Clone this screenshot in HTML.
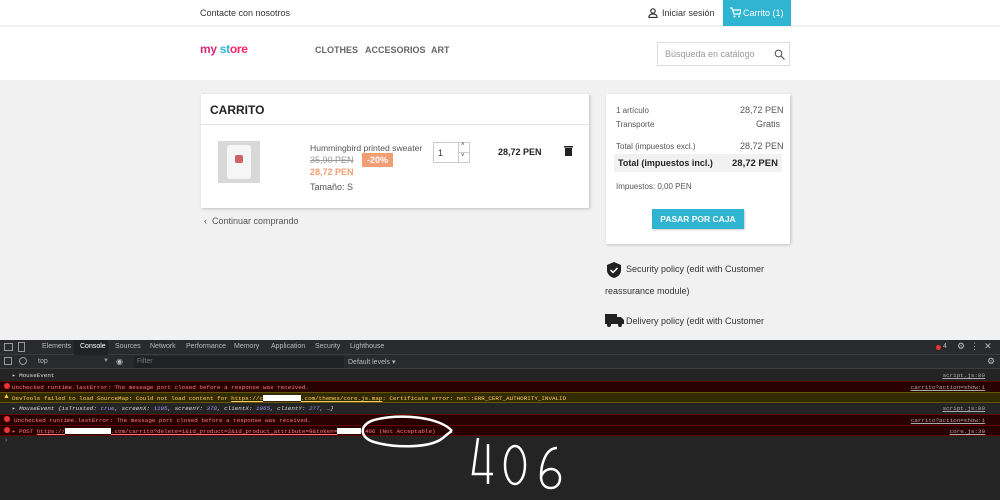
<!DOCTYPE html><html><head><meta charset="utf-8"><style>
*{box-sizing:border-box;margin:0;padding:0}
body{width:1000px;height:500px;overflow:hidden;font-family:"Liberation Sans",sans-serif;background:#f1f1f1;position:relative;font-size:9px;color:#333}
.a{position:absolute;white-space:nowrap}
.mono{font-family:"Liberation Mono",monospace;font-size:5.9px}
.red{display:inline-block;background:#fff;height:6px;vertical-align:middle}
.lk{position:absolute;right:15px;color:#aaa;text-decoration:underline}
</style></head><body>
<div class="a" style="left:0;top:0;width:1000px;height:26px;background:#fff;border-bottom:1px solid #eee"></div>
<div class="a" style="left:200px;top:8px;font-size:9px;color:#333">Contacte con nosotros</div>
<svg class="a" style="left:648px;top:8px" width="10" height="10" viewBox="0 0 10 10"><circle cx="5" cy="3" r="2.2" fill="none" stroke="#333" stroke-width="1.2"/><path d="M1 9.5v-1c0-1.5 2-2.5 4-2.5s4 1 4 2.5v1z" fill="none" stroke="#333" stroke-width="1.2"/></svg>
<div class="a" style="left:662px;top:8px;font-size:9px">Iniciar sesión</div>
<div class="a" style="left:723px;top:0;width:68px;height:26px;background:#2fb5d2"></div>
<svg class="a" style="left:730px;top:7px" width="11" height="11" viewBox="0 0 11 11"><path d="M0 1h2l2 6h6l1-4H3" fill="none" stroke="#fff" stroke-width="1.3"/><circle cx="4.5" cy="9.5" r="1" fill="#fff"/><circle cx="9" cy="9.5" r="1" fill="#fff"/></svg>
<div class="a" style="left:743px;top:8px;font-size:9px;color:#fff">Carrito (1)</div>
<div class="a" style="left:0;top:27px;width:1000px;height:53px;background:#fff"></div>
<div class="a" style="left:200px;top:42px;font-size:12px;font-weight:bold;letter-spacing:-0.3px"><span style="color:#d22a7c">my</span> <span style="color:#2fb5d2">st</span><span style="color:#f26">ore</span></div>
<div class="a" style="left:315px;top:45px;font-size:9px;color:#666;font-weight:bold">CLOTHES</div>
<div class="a" style="left:365px;top:45px;font-size:9px;color:#666;font-weight:bold">ACCESORIOS</div>
<div class="a" style="left:431px;top:45px;font-size:9px;color:#666;font-weight:bold">ART</div>
<div class="a" style="left:657px;top:42px;width:133px;height:24px;border:1px solid #ddd;background:#fff"></div>
<div class="a" style="left:665px;top:49px;font-size:9px;color:#999">Búsqueda en catálogo</div>
<svg class="a" style="left:774px;top:49px" width="11" height="11" viewBox="0 0 11 11"><circle cx="4.5" cy="4.5" r="3.3" fill="none" stroke="#555" stroke-width="1.1"/><path d="M7 7l3.5 3.5" stroke="#555" stroke-width="1.2"/></svg>

<div class="a" style="left:201px;top:94px;width:388px;height:114px;background:#fff;box-shadow:1px 1px 3px rgba(0,0,0,.2)"></div>
<div class="a" style="left:210px;top:103px;font-size:12px;font-weight:bold;color:#232323">CARRITO</div>
<div class="a" style="left:201px;top:124px;width:388px;height:1px;background:#e5e5e5"></div>
<div class="a" style="left:218px;top:141px;width:42px;height:42px;background:#d8d8d8"></div>
<div class="a" style="left:227px;top:145px;width:24px;height:34px;background:#f6f6f6;border-radius:3px"></div>
<div class="a" style="left:235px;top:155px;width:8px;height:8px;background:#c66;border-radius:2px"></div>
<div class="a" style="left:310px;top:143px;font-size:8.6px;color:#555">Hummingbird printed sweater</div>
<div class="a" style="left:310px;top:155px;font-size:9px;color:#999;text-decoration:line-through">35,90 PEN</div>
<div class="a" style="left:362px;top:153px;width:31px;height:14px;background:#f39d72;color:#fff;font-size:9px;font-weight:bold;text-align:center;line-height:14px">-20%</div>
<div class="a" style="left:310px;top:167px;font-size:9px;color:#f39d72;font-weight:bold">28,72 PEN</div>
<div class="a" style="left:310px;top:182px;font-size:9px;color:#555">Tamaño: S</div>
<div class="a" style="left:433px;top:142px;width:37px;height:21px;border:1px solid #ccc;background:#fff"></div>
<div class="a" style="left:458px;top:142px;width:1px;height:21px;background:#ccc"></div>
<div class="a" style="left:458px;top:152px;width:12px;height:1px;background:#ccc"></div>
<div class="a" style="left:438px;top:148px;font-size:9px">1</div>
<div class="a" style="left:461px;top:142px;font-size:6px">˄</div>
<div class="a" style="left:461px;top:153px;font-size:6px">˅</div>
<div class="a" style="left:498px;top:147px;font-size:9px;font-weight:bold;color:#232323">28,72 PEN</div>
<svg class="a" style="left:564px;top:145px" width="9" height="11" viewBox="0 0 9 11"><rect x="0" y="1" width="9" height="1.5" fill="#222"/><rect x="1" y="3" width="7" height="8" fill="#222"/></svg>
<div class="a" style="left:204px;top:216px;font-size:9px;color:#555">‹ &nbsp;Continuar comprando</div>

<div class="a" style="left:606px;top:94px;width:184px;height:150px;background:#fff;box-shadow:1px 1px 3px rgba(0,0,0,.2)"></div>
<div class="a" style="left:616px;top:106px;font-size:8px;color:#555">1 artículo</div>
<div class="a" style="left:740px;top:105px;font-size:9px;color:#555">28,72 PEN</div>
<div class="a" style="left:616px;top:120px;font-size:8px;color:#555">Transporte</div>
<div class="a" style="left:756px;top:119px;font-size:9px;color:#555">Gratis</div>
<div class="a" style="left:616px;top:142px;font-size:8px;color:#555">Total (impuestos excl.)</div>
<div class="a" style="left:740px;top:141px;font-size:9px;color:#555">28,72 PEN</div>
<div class="a" style="left:614px;top:154px;width:168px;height:18px;background:#f1f1f1"></div>
<div class="a" style="left:618px;top:158px;font-size:9px;font-weight:bold;color:#232323">Total (impuestos incl.)</div>
<div class="a" style="left:732px;top:158px;font-size:9.5px;font-weight:bold;color:#232323">28,72 PEN</div>
<div class="a" style="left:616px;top:182px;font-size:8px;color:#555">Impuestos: 0,00 PEN</div>
<div class="a" style="left:652px;top:209px;width:92px;height:20px;background:#2fb5d2;color:#fff;font-size:8.5px;font-weight:bold;text-align:center;line-height:20px;box-shadow:1px 1px 2px rgba(0,0,0,.2)">PASAR POR CAJA</div>
<svg class="a" style="left:606px;top:262px" width="16" height="16" viewBox="0 0 16 16"><path d="M8 0L15 3v5c0 4-3 7-7 8C4 15 1 12 1 8V3z" fill="#222"/><path d="M4.5 8l2.5 2.5 4.5-4.5" stroke="#fff" stroke-width="1.5" fill="none"/></svg>
<div class="a" style="left:626px;top:264px;font-size:9px;color:#333">Security policy (edit with Customer</div>
<div class="a" style="left:605px;top:286px;font-size:9px;color:#333">reassurance module)</div>
<svg class="a" style="left:605px;top:314px" width="19" height="13" viewBox="0 0 19 13"><rect x="0" y="0" width="12" height="10" fill="#222"/><path d="M12 3h4l3 3v4h-7z" fill="#222"/><circle cx="4" cy="11" r="2" fill="#222"/><circle cx="15" cy="11" r="2" fill="#222"/></svg>
<div class="a" style="left:626px;top:316px;font-size:9px;color:#333">Delivery policy (edit with Customer</div>

<div class="a" style="left:0;top:340px;width:1000px;height:160px;background:#242424"></div>
<div class="a" style="left:0;top:340px;width:1000px;height:15px;background:#292a2d;border-bottom:1px solid #3c3c3c"></div>
<div class="a" style="left:74px;top:340px;width:34px;height:15px;background:#202124"></div>
<div class="a" style="left:4px;top:343px;width:9px;height:8px;border:1px solid #999"></div>
<div class="a" style="left:18px;top:342px;width:7px;height:10px;border:1px solid #999"></div>
<div class="a" style="left:42px;top:343px;font-size:7px;color:#bbb">Elements</div>
<div class="a" style="left:80px;top:343px;font-size:7px;color:#fff">Console</div>
<div class="a" style="left:115px;top:343px;font-size:7px;color:#bbb">Sources</div>
<div class="a" style="left:150px;top:343px;font-size:7px;color:#bbb">Network</div>
<div class="a" style="left:186px;top:343px;font-size:7px;color:#bbb">Performance</div>
<div class="a" style="left:234px;top:343px;font-size:7px;color:#bbb">Memory</div>
<div class="a" style="left:271px;top:343px;font-size:7px;color:#bbb">Application</div>
<div class="a" style="left:315px;top:343px;font-size:7px;color:#bbb">Security</div>
<div class="a" style="left:350px;top:343px;font-size:7px;color:#bbb">Lighthouse</div>
<div class="a" style="left:936px;top:345px;width:5px;height:5px;background:#e33;border-radius:50%"></div>
<div class="a" style="left:943px;top:343px;font-size:7px;color:#bbb">4</div>
<div class="a" style="left:957px;top:341px;font-size:9px;color:#bbb">⚙ &nbsp;⋮ &nbsp;✕</div>
<div class="a" style="left:0;top:355px;width:1000px;height:14px;background:#292a2d;border-bottom:1px solid #3c3c3c"></div>
<div class="a" style="left:4px;top:357px;width:8px;height:8px;border:1px solid #999"></div>
<div class="a" style="left:19px;top:357px;width:8px;height:8px;border:1px solid #999;border-radius:50%"></div>
<div class="a" style="left:38px;top:358px;font-size:7px;color:#bbb">top</div>
<div class="a" style="left:103px;top:358px;font-size:6px;color:#999">▼</div>
<div class="a" style="left:116px;top:357px;font-size:8px;color:#bbb">◉</div>
<div class="a" style="left:134px;top:356px;width:210px;height:12px;background:#202124"></div>
<div class="a" style="left:137px;top:358px;font-size:7px;color:#777">Filter</div>
<div class="a" style="left:348px;top:358px;font-size:7px;color:#bbb">Default levels ▾</div>
<div class="a" style="left:987px;top:356px;font-size:9px;color:#bbb">⚙</div>

<div class="a mono" style="left:0;top:370px;width:1000px;height:11px;line-height:11px;padding-left:12px;color:#ddd">▸ MouseEvent<span class="lk">script.js:80</span></div>
<div class="a mono" style="left:0;top:381px;width:1000px;height:11px;line-height:11px;padding-left:12px;background:#290000;border-top:1px solid #5c0000;color:#f77">Unchecked runtime.lastError: The message port closed before a response was received.<span class="lk">carrito?action=show:1</span></div>
<div class="a mono" style="left:0;top:392px;width:1000px;height:11px;line-height:11px;padding-left:12px;background:#332b00;border-top:1px solid #665500;border-bottom:1px solid #665500;color:#fc6">DevTools failed to load SourceMap: Could not load content for <u>https://c<span class="red" style="width:38px"></span>.com/themes/core.js.map</u>: Certificate error: net::ERR_CERT_AUTHORITY_INVALID</div>
<div class="a mono" style="left:0;top:403px;width:1000px;height:11px;line-height:11px;padding-left:12px;color:#ddd">▸ <i>MouseEvent {isTrusted: <span style="color:#99f">true</span>, screenX: <span style="color:#99f">1105</span>, screenY: <span style="color:#99f">378</span>, clientX: <span style="color:#99f">1065</span>, clientY: <span style="color:#99f">277</span>, …}</i><span class="lk">script.js:80</span></div>
<div class="a mono" style="left:0;top:414px;width:1000px;height:11px;line-height:11px;padding-left:14px;background:#290000;border-top:1px solid #5c0000;color:#f77">Unchecked runtime.lastError: The message port closed before a response was received.<span class="lk">carrito?action=show:1</span></div>
<div class="a mono" style="left:0;top:425px;width:1000px;height:11px;line-height:11px;padding-left:12px;background:#290000;border-top:1px solid #5c0000;border-bottom:1px solid #5c0000;color:#f77">▸ POST <u>https://<span class="red" style="width:46px"></span>.com/carrito?delete=1&amp;id_product=2&amp;id_product_attribute=9&amp;token=<span class="red" style="width:24px"></span></u> 406 (Not Acceptable)<span class="lk">core.js:39</span></div>
<div class="a" style="left:4px;top:383px;width:6px;height:6px;background:#e33;border-radius:50%"></div>
<div class="a" style="left:4px;top:416px;width:6px;height:6px;background:#e33;border-radius:50%"></div>
<div class="a" style="left:4px;top:427px;width:6px;height:6px;background:#e33;border-radius:50%"></div>
<div class="a" style="left:3px;top:393px;font-size:7px;color:#fc3">▲</div>
<div class="a mono" style="left:4px;top:437px;color:#4af;font-size:7px">›</div>
<svg class="a" style="left:350px;top:410px" width="250" height="90" viewBox="0 0 250 90"><path d="M102 21C90 7 50 3 24 10 8 15 10 28 24 32c20 6 52 6 66-2 6-4 8-7 12-9" fill="none" stroke="#fff" stroke-width="2.5"/><path d="M128 28l-5 36h20M138 34v40" fill="none" stroke="#fff" stroke-width="2.5"/><ellipse cx="165" cy="55" rx="10" ry="19" fill="none" stroke="#fff" stroke-width="2.5"/><path d="M207 38c-12 0-16 18-16 28 0 8 4 12 10 12s9-5 9-10-4-9-9-9-9 4-10 8" fill="none" stroke="#fff" stroke-width="2.5"/></svg>
</body></html>
